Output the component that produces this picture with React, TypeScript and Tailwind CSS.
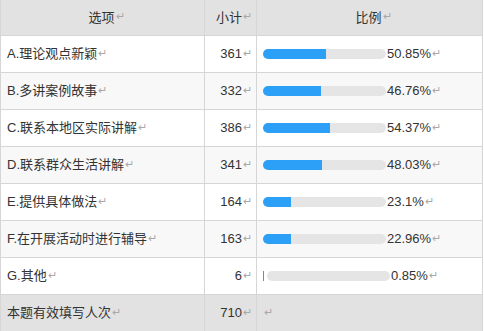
import React from 'react';

type Row = { label: string; count: number; pct: string; ratio: number };

const rows: Row[] = [
  { label: 'A.理论观点新颖', count: 361, pct: '50.85%', ratio: 0.5085 },
  { label: 'B.多讲案例故事', count: 332, pct: '46.76%', ratio: 0.4676 },
  { label: 'C.联系本地区实际讲解', count: 386, pct: '54.37%', ratio: 0.5437 },
  { label: 'D.联系群众生活讲解', count: 341, pct: '48.03%', ratio: 0.4803 },
  { label: 'E.提供具体做法', count: 164, pct: '23.1%', ratio: 0.231 },
  { label: 'F.在开展活动时进行辅导', count: 163, pct: '22.96%', ratio: 0.2296 },
  { label: 'G.其他', count: 6, pct: '0.85%', ratio: 0.0085 },
];

const BAR = 123;

const Mark = () => <span className="text-[11px] text-[#a8a8a8] ml-[1px] relative top-[-1px]">↵</span>;

const Bar: React.FC<{ ratio: number }> = ({ ratio }) => {
  const w = Math.round(ratio * BAR);
  if (w < 4) {
    return (
      <div className="flex items-center">
        <span className="block h-[10px] w-[1px] bg-[#2ca0f6]" />
        <span className="block h-[10px] w-[123px] ml-[3px] rounded-full bg-[#e5e5e5]" />
      </div>
    );
  }
  return (
    <div className="flex items-center">
      <span className="block h-[10px] rounded-l-full bg-[#2ca0f6]" style={{ width: w }} />
      <span className="block h-[10px] rounded-r-full bg-[#e5e5e5]" style={{ width: BAR - w }} />
    </div>
  );
};

export default function App() {
  return (
    <div
      className="w-[482px] bg-white text-[13px] text-[#333]"
      style={{ fontFamily: '"Liberation Sans", "Noto Sans CJK SC", sans-serif' }}
    >
      <div className="grid grid-cols-[204px_52px_226px] border-l border-[#d6d6d6]">
        {/* header */}
        <div className="h-[36px] bg-[#e2e2e2] border-r border-b border-[#d6d6d6] flex items-center justify-center pl-[8px]">
          选项<Mark />
        </div>
        <div className="h-[36px] bg-[#e2e2e2] border-r border-b border-[#d6d6d6] flex items-center justify-end pr-[4px]">
          小计<Mark />
        </div>
        <div className="h-[36px] bg-[#e2e2e2] border-r border-b border-[#d6d6d6] flex items-center justify-center pl-[8px]">
          比例<Mark />
        </div>

        {rows.map((r, i) => {
          const bg = i % 2 === 1 ? 'bg-[#f8f8f8]' : 'bg-white';
          return (
            <React.Fragment key={r.label}>
              <div className={`h-[37px] ${bg} border-r border-b border-[#d6d6d6] flex items-center pl-[6px]`}>
                {r.label}<Mark />
              </div>
              <div className={`h-[37px] ${bg} border-r border-b border-[#d6d6d6] flex items-center justify-end pr-[4px]`}>
                {r.count}<Mark />
              </div>
              <div className={`h-[37px] ${bg} border-r border-b border-[#d6d6d6] flex items-center pl-[6px]`}>
                <Bar ratio={r.ratio} />
                <span className="ml-[1px]">{r.pct}</span>
                <Mark />
              </div>
            </React.Fragment>
          );
        })}

        {/* total */}
        <div className="h-[36px] bg-[#e2e2e2] border-r border-[#d6d6d6] flex items-center pl-[6px]">
          本题有效填写人次<Mark />
        </div>
        <div className="h-[36px] bg-[#e2e2e2] border-r border-[#d6d6d6] flex items-center justify-end pr-[4px]">
          710<Mark />
        </div>
        <div className="h-[36px] bg-[#e2e2e2] border-r border-[#d6d6d6] flex items-center pl-[6px]">
          <Mark />
        </div>
      </div>
    </div>
  );
}
